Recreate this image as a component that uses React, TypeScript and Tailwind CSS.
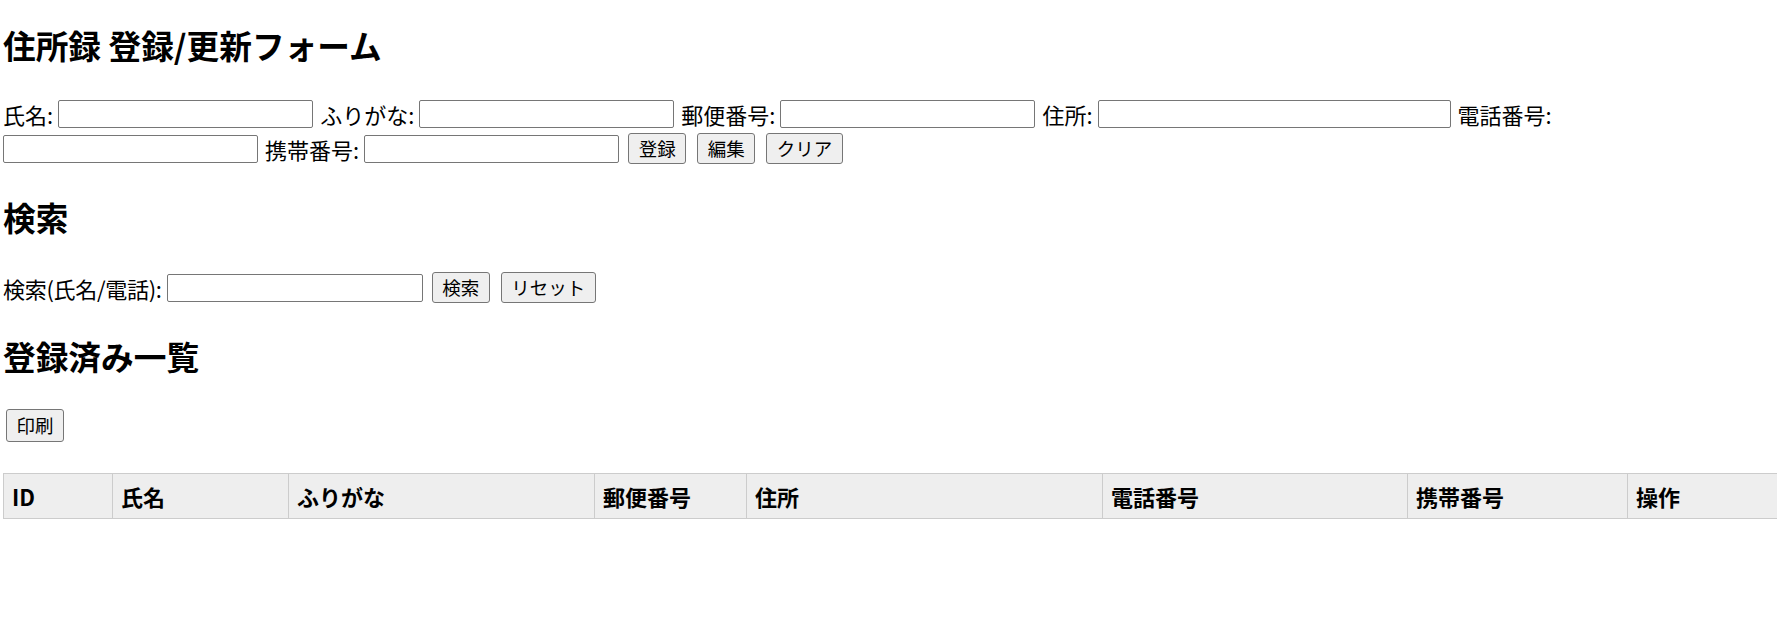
import React from 'react';

const font = { fontFamily: '"Noto Sans CJK JP", "Noto Sans", sans-serif' };

function Field({ label, wide }: { label: string; wide?: boolean }) {
    return (
        <>
            <span className="ml-[2px] leading-[28px] whitespace-nowrap">{label}</span>
            <input
                type="text"
                className={`${wide ? 'w-[353px]' : 'w-[255px]'} h-[28px] border border-[#767676] rounded-[2px] bg-white px-1`}
            />
        </>
    );
}

function Btn({ children, className = '' }: { children: React.ReactNode; className?: string }) {
    return (
        <button className={`h-[31px] px-[9.5px] bg-[#efefef] border border-[#767676] rounded-[3px] text-[18.5px] leading-none text-black ${className}`}>
            {children}
        </button>
    );
}

const columns = [
    { name: 'ID', w: 'w-[109px]' },
    { name: '氏名', w: 'w-[176px]' },
    { name: 'ふりがな', w: 'w-[306px]' },
    { name: '郵便番号', w: 'w-[152px]' },
    { name: '住所', w: 'w-[356px]' },
    { name: '電話番号', w: 'w-[305px]' },
    { name: '携帯番号', w: 'w-[220px]' },
    { name: '操作', w: 'w-[200px]' },
];

export default function App() {
    return (
        <div className="w-full min-h-[626px] overflow-hidden bg-white text-black px-[3px] text-[22px]" style={font}>
            {/* 登録フォーム */}
            <h2 className="mt-[25px] text-[32.7px] leading-[40px] font-bold">住所録 登録/更新フォーム</h2>
            <div className="mt-[35px] flex flex-wrap items-center gap-x-[5px] gap-y-[5px]">
                <span className="leading-[28px] whitespace-nowrap">氏名:</span>
                <input type="text" className="w-[255px] h-[28px] border border-[#767676] rounded-[2px] bg-white px-1" />
                <Field label="ふりがな:" />
                <Field label="郵便番号:" />
                <Field label="住所:" wide />
                <Field label="電話番号:" />
                <Field label="携帯番号:" />
                <Btn className="ml-[4px]">登録</Btn>
                <Btn className="ml-[6px]">編集</Btn>
                <Btn className="ml-[6px]">クリア</Btn>
            </div>

            {/* 検索 */}
            <h2 className="mt-[33px] text-[32.7px] leading-[40px] font-bold">検索</h2>
            <div className="mt-[35px] flex items-center gap-x-[5px]">
                <span className="leading-[28px] whitespace-nowrap tracking-[-0.3px]">検索(氏名/電話):</span>
                <input type="text" className="w-[256px] h-[28px] border border-[#767676] rounded-[2px] bg-white px-1" />
                <Btn className="ml-[4px]">検索</Btn>
                <Btn className="ml-[6px]">リセット</Btn>
            </div>

            {/* 一覧 */}
            <h2 className="mt-[33px] text-[32.7px] leading-[40px] font-bold">登録済み一覧</h2>
            <div className="mt-[31px]">
                <Btn className="ml-[3px] h-[33px]">印刷</Btn>
            </div>
            <table className="mt-[31px] table-fixed border-collapse w-[1824px]">
                <thead>
                    <tr className="bg-[#eeeeee]">
                        {columns.map((c) => (
                            <th
                                key={c.name}
                                className={`${c.w} border border-[#cccccc] px-[8px] py-[8px] text-left font-bold leading-[28px]`}
                            >
                                {c.name}
                            </th>
                        ))}
                    </tr>
                </thead>
                <tbody></tbody>
            </table>
        </div>
    );
}
